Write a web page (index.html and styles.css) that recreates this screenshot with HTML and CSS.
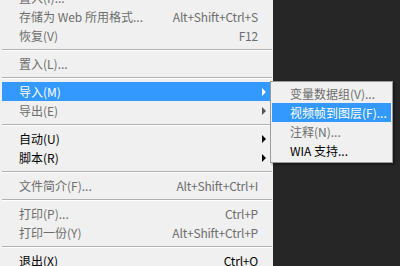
FILE: index.html
```html
<!DOCTYPE html>
<html>
<head>
<meta charset="utf-8">
<link rel="stylesheet" href="styles.css">
</head>
<body>
<div class="stage">
  <div class="menu">
    <div class="item disabled"><span class="label">置入(I)...</span><span class="key"></span><span class="sub"></span></div>
    <div class="item disabled"><span class="label">存储为 Web 所用格式...</span><span class="key">Alt+Shift+Ctrl+S</span><span class="sub"></span></div>
    <div class="item disabled"><span class="label">恢复(V)</span><span class="key">F12</span><span class="sub"></span></div>
    <div class="sep"></div>
    <div class="item disabled"><span class="label">置入(L)...</span><span class="key"></span><span class="sub"></span></div>
    <div class="sep"></div>
    <div class="item active"><span class="label">导入(M)</span><span class="key"></span><span class="sub"><i class="arrow"></i></span></div>
    <div class="item disabled"><span class="label">导出(E)</span><span class="key"></span><span class="sub"><i class="arrow"></i></span></div>
    <div class="sep"></div>
    <div class="item"><span class="label">自动(U)</span><span class="key"></span><span class="sub"><i class="arrow"></i></span></div>
    <div class="item"><span class="label">脚本(R)</span><span class="key"></span><span class="sub"><i class="arrow"></i></span></div>
    <div class="sep"></div>
    <div class="item disabled"><span class="label">文件简介(F)...</span><span class="key">Alt+Shift+Ctrl+I</span><span class="sub"></span></div>
    <div class="sep"></div>
    <div class="item disabled"><span class="label">打印(P)...</span><span class="key">Ctrl+P</span><span class="sub"></span></div>
    <div class="item disabled"><span class="label">打印一份(Y)</span><span class="key">Alt+Shift+Ctrl+P</span><span class="sub"></span></div>
    <div class="sep"></div>
    <div class="item"><span class="label">退出(X)</span><span class="key">Ctrl+Q</span><span class="sub"></span></div>
  </div>
  <div class="submenu">
    <div class="item disabled"><span class="label">变量数据组(V)...</span></div>
    <div class="item active"><span class="label">视频帧到图层(F)...</span></div>
    <div class="item disabled"><span class="label">注释(N)...</span></div>
    <div class="item"><span class="label">WIA 支持...</span></div>
  </div>
</div>
</body>
</html>
```
FILE: styles.css
```css
html, body {
  margin: 0;
  padding: 0;
  background: #262626;
  overflow: hidden;
}
.stage {
  position: relative;
  width: 400px;
  height: 266px;
  overflow: hidden;
  font-family: "Noto Sans CJK SC", "Microsoft YaHei", sans-serif;
  font-size: 12px;
}
.menu {
  width: 273px;
  margin-top: -12px;
  background: #f0f0f0;
  padding-bottom: 10px;
}
.item {
  display: flex;
  align-items: center;
  height: 19px;
  margin: 0 2px;
  padding-left: 17px;
  color: #000;
  white-space: nowrap;
}
.item .label {
  flex: 1;
  line-height: 19px;
}
.item .key {
  line-height: 19px;
  letter-spacing: -0.2px;
}
.item .sub {
  box-sizing: border-box;
  width: 13px;
  height: 19px;
  display: flex;
  align-items: center;
  justify-content: flex-end;
  padding-right: 5px;
}
.item.disabled {
  color: #6d6d6d;
}
.item.active {
  background: #3399ff;
  color: #fff;
}
.arrow {
  display: block;
  width: 0;
  height: 0;
  border-top: 4px solid transparent;
  border-bottom: 4px solid transparent;
  border-left: 4px solid currentColor;
}
.item.disabled .arrow {
  border-left-color: #555;
}
.sep {
  height: 9px;
  display: flex;
  flex-direction: column;
  justify-content: center;
  margin: 0 1px 0 2px;
}
.sep::before {
  content: "";
  display: block;
  height: 1px;
  background: #b0b0b0;
}
.sep::after {
  content: "";
  display: block;
  height: 1px;
  background: #ffffff;
}
.submenu {
  position: absolute;
  left: 270px;
  top: 81px;
  width: 121px;
  padding: 2px 0;
  background: #f0f0f0;
  border: 1px solid #9a9a9a;
  box-shadow: 2px 2px 2px rgba(0,0,0,0.35);
}
.submenu .item {
  margin: 0 1px;
  padding-left: 18px;
}
```
